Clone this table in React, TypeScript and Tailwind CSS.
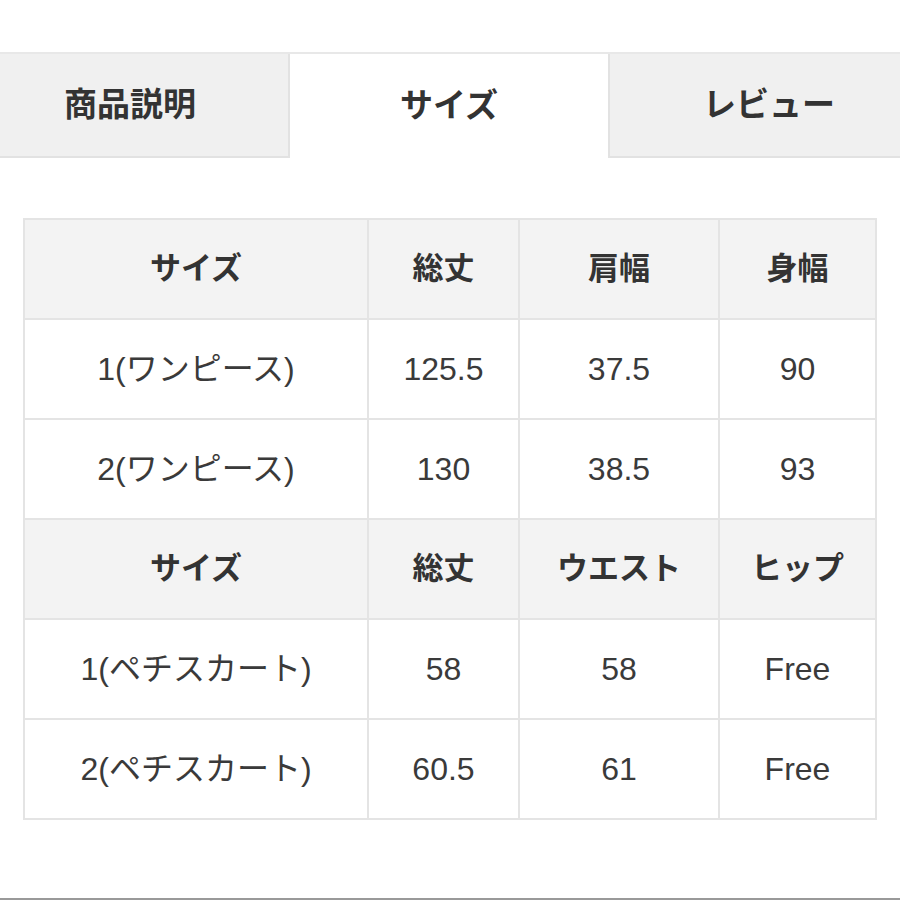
const font = { fontFamily: '"Liberation Sans", "Noto Sans CJK JP", sans-serif' };

type Row = { cells: string[]; head?: boolean };

const rows: Row[] = [
  { cells: ['サイズ', '総丈', '肩幅', '身幅'], head: true },
  { cells: ['1(ワンピース)', '125.5', '37.5', '90'] },
  { cells: ['2(ワンピース)', '130', '38.5', '93'] },
  { cells: ['サイズ', '総丈', 'ウエスト', 'ヒップ'], head: true },
  { cells: ['1(ペチスカート)', '58', '58', 'Free'] },
  { cells: ['2(ペチスカート)', '60.5', '61', 'Free'] },
];

const widths = ['w-[344px]', 'w-[151px]', 'w-[200px]', 'w-[157px]'];

export default function App() {
  return (
    <div className="w-[900px] h-[900px] overflow-hidden bg-white flex flex-col text-[#333]" style={font}>
      {/* tabs, row is wider than the view and cut on both sides */}
      <div className="mt-[52px] -ml-[28px] w-[956px] flex h-[106px] border-t-2 border-[#e8e8e8]">
        <div className="w-[318px] bg-[#f0f0f0] border-r-2 border-b-2 border-[#e2e2e2] flex items-center justify-center text-[33px] font-semibold">
          商品説明
        </div>
        <div className="w-[318px] bg-white flex items-center justify-center text-[33px] font-semibold">
          サイズ
        </div>
        <div className="w-[320px] bg-[#f0f0f0] border-l-2 border-b-2 border-[#e2e2e2] flex items-center justify-center text-[33px] font-semibold">
          レビュー
        </div>
      </div>

      {/* size table */}
      <div className="mt-[60px] ml-[23px] w-[854px]">
        <table className="w-full border-collapse table-fixed border-2 border-[#e0e0e0]">
          <tbody>
            {rows.map((row, i) => (
              <tr key={i} className={row.head ? 'bg-[#f3f3f3]' : 'bg-white'}>
                {row.cells.map((c, j) => (
                  <td
                    key={j}
                    className={`${widths[j]} h-[100px] border-2 border-[#e4e4e4] text-center align-middle p-0 ${
                      row.head ? 'text-[31px] font-bold' : 'text-[32px] font-normal text-[#3a3a3a]'
                    }`}
                  >
                    {c}
                  </td>
                ))}
              </tr>
            ))}
          </tbody>
        </table>
      </div>

      <div className="mt-auto h-[2px] bg-[#999]" />
    </div>
  );
}
